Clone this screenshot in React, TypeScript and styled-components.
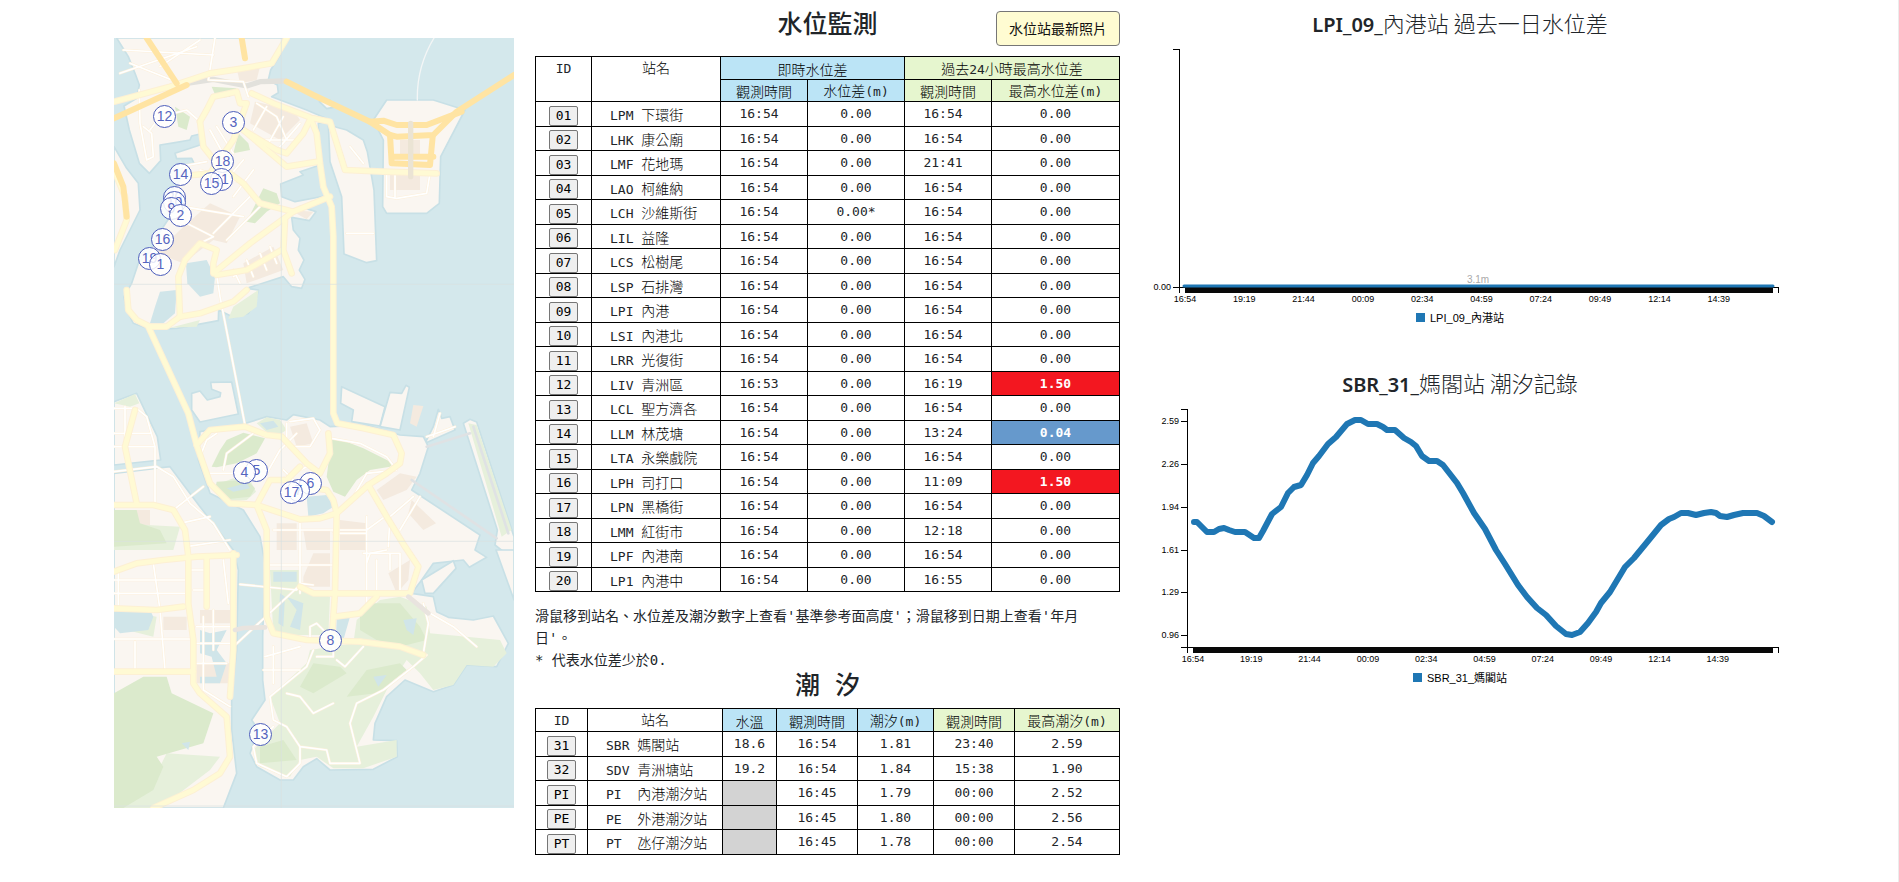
import React from "react";
import styled, { createGlobalStyle } from "styled-components";

const mono = `"DejaVu Sans Mono", "Noto Sans CJK TC", monospace`;
const sans = `"Liberation Sans", "Noto Sans CJK TC", sans-serif`;

const GlobalStyle = createGlobalStyle`
  * { box-sizing: border-box; }
  body { margin: 0; background: #fff; color: #212529; font-family: ${mono}; }
`;

const Page = styled.main`
  display: grid;
  grid-template-columns: 514fr 626fr 758fr;
  min-height: 100vh;
  border-right: 1px solid #ececec;
`;

const MapColumn = styled.section`
  display: flex;
  justify-content: flex-end;
  align-items: flex-start;
  padding-top: 38px;
`;

const MapFrame = styled.div`
  position: relative;
  width: 400px;
  overflow: hidden;
  svg { display: block; width: 100%; }
`;

const Pin = styled.button`
  position: absolute;
  width: 23px;
  height: 23px;
  margin: -12px 0 0 -12px;
  padding: 0;
  border: 1px solid #4c5dbb;
  border-radius: 50%;
  background: rgba(255, 255, 255, 0.85);
  color: #5565bf;
  font: 14px/21px ${sans};
  text-align: center;
`;

const TableColumn = styled.section`
  padding: 11px 20px 0 21px;
`;

const Header = styled.header`
  display: grid;
  grid-template-columns: 1fr auto 1fr;
  align-items: start;
  margin-bottom: 10px;
`;

const Heading = styled.h4`
  margin: 0;
  font-size: 25px;
  line-height: 28px;
  font-weight: 500;
  text-align: center;
`;

const PhotoButton = styled.button`
  justify-self: end;
  height: 35px;
  padding: 0 12px;
  border: 1px solid #767676;
  border-radius: 4px;
  background: #fffcd2;
  color: #111;
  font: 14px/20px ${mono};
`;

const Grid = styled.table`
  width: 100%;
  table-layout: fixed;
  border-collapse: collapse;
  font-size: 14px;
  line-height: 20px;
`;

const Row = styled.tr<{ $h: number }>`
  height: ${(p) => p.$h}px;
`;

const tones = { none: "transparent", blue: "#bbe4f6", green: "#e6f6cf" };

const Head = styled.th<{ $tone?: keyof typeof tones }>`
  padding: 0;
  border: 1px solid #000;
  background: ${(p) => tones[p.$tone ?? "none"]};
  color: #000;
  font-family: "Noto Sans CJK TC", sans-serif;
  font-weight: 300;
  vertical-align: ${(p) => (p.$tone ? "bottom" : "top")};
`;

const Code = styled.span`
  font: 400 13px/18px "DejaVu Sans Mono", monospace;
  color: #212529;
`;

const alerts: Record<string, string> = { "1.50": "#f31720", "0.04": "#6699cc" };

const Cell = styled.td<{ $shift?: boolean; $alert?: string }>`
  padding: 0 ${(p) => (p.$shift ? 10 : 0)}px 0 0;
  border: 1px solid #000;
  font-size: 13px;
  text-align: center;
  background: ${(p) => p.$alert ?? "transparent"};
  color: ${(p) => (p.$alert ? "#fff" : "inherit")};
  font-weight: ${(p) => (p.$alert ? 700 : 400)};
`;

const IdCell = styled(Cell)`
  vertical-align: bottom;
`;

const NameCell = styled.td`
  padding: 1px 0 0 18px;
  border: 1px solid #000;
  color: #000;
  font-family: "Noto Sans CJK TC", sans-serif;
  font-weight: 300;
  white-space: pre;
`;

const BlankCell = styled.td`
  border: 1px solid #000;
  background: #d3d3d3;
`;

const IdButton = styled.button`
  display: block;
  width: 29px;
  height: 20px;
  margin: 0 auto;
  padding: 0;
  border: 1px solid #767676;
  border-radius: 2px;
  background: #efefef;
  color: #000;
  font: 13px/18px ${mono};
`;

const Note = styled.p`
  margin: 13px 0 1px;
  padding-right: 20px;
  font-size: 14px;
  line-height: 22px;
`;

const TideHeading = styled(Heading)`
  margin-bottom: 8px;
`;

const ChartColumn = styled.section`
  display: flex;
  flex-direction: column;
  align-items: flex-start;
  gap: 28px;
`;

const Figure = styled.figure`
  width: 640px;
  max-width: 100%;
  margin: 0;
  svg { display: block; overflow: visible; font-family: ${sans}; }
`;

const ChartTitle = styled.figcaption`
  padding-top: 7px;
  height: 38px;
  font: 300 22px/30px "Noto Sans CJK TC", sans-serif;
  text-align: center;
`;

const Latin = styled.span`
  font-family: "Noto Sans", "Open Sans", sans-serif;
  font-size: 20px;
  font-weight: 600;
`;

type Station = [string, string, string, string, string, string];
const stations: Station[] = [
  ["01", "LPM 下環街", "16:54", "0.00", "16:54", "0.00"],
  ["02", "LHK 康公廟", "16:54", "0.00", "16:54", "0.00"],
  ["03", "LMF 花地瑪", "16:54", "0.00", "21:41", "0.00"],
  ["04", "LAO 柯維納", "16:54", "0.00", "16:54", "0.00"],
  ["05", "LCH 沙維斯街", "16:54", "0.00*", "16:54", "0.00"],
  ["06", "LIL 益隆", "16:54", "0.00", "16:54", "0.00"],
  ["07", "LCS 松樹尾", "16:54", "0.00", "16:54", "0.00"],
  ["08", "LSP 石排灣", "16:54", "0.00", "16:54", "0.00"],
  ["09", "LPI 內港", "16:54", "0.00", "16:54", "0.00"],
  ["10", "LSI 內港北", "16:54", "0.00", "16:54", "0.00"],
  ["11", "LRR 光復街", "16:54", "0.00", "16:54", "0.00"],
  ["12", "LIV 青洲區", "16:53", "0.00", "16:19", "1.50"],
  ["13", "LCL 聖方濟各", "16:54", "0.00", "16:54", "0.00"],
  ["14", "LLM 林茂塘", "16:54", "0.00", "13:24", "0.04"],
  ["15", "LTA 永樂戲院", "16:54", "0.00", "16:54", "0.00"],
  ["16", "LPH 司打口", "16:54", "0.00", "11:09", "1.50"],
  ["17", "LPN 黑橋街", "16:54", "0.00", "16:54", "0.00"],
  ["18", "LMM 紅街市", "16:54", "0.00", "12:18", "0.00"],
  ["19", "LPF 內港南", "16:54", "0.00", "16:54", "0.00"],
  ["20", "LP1 內港中", "16:54", "0.00", "16:55", "0.00"],
];

const tides: [string, string, string, string, string, string, string][] = [
  ["31", "SBR 媽閣站", "18.6", "16:54", "1.81", "23:40", "2.59"],
  ["32", "SDV 青洲塘站", "19.2", "16:54", "1.84", "15:38", "1.90"],
  ["PI", "PI  內港潮汐站", "", "16:45", "1.79", "00:00", "2.52"],
  ["PE", "PE  外港潮汐站", "", "16:45", "1.80", "00:00", "2.56"],
  ["PT", "PT  氹仔潮汐站", "", "16:45", "1.78", "00:00", "2.54"],
];

const Cols = ({ widths }: { widths: number[] }) => (
  <colgroup>
    {widths.map((w, i) => (
      <col key={i} style={{ width: `${(w / 584) * 100}%` }} />
    ))}
  </colgroup>
);

/* The station code takes the first four characters of a name */
const Name = ({ text }: { text: string }) => (
  <NameCell>
    <Code>{text.slice(0, 4)}</Code>
    {text.slice(4)}
  </NameCell>
);

/* Station pins, drawn in order so later ones overlap earlier ones */
const pins: [number, number, number][] = [
  [12, 51, 79], [3, 120, 85], [18, 109, 124], [14, 67, 137], [11, 108, 142],
  [15, 98, 146], [20, 61, 160], [10, 61, 165], [9, 58, 171], [2, 67, 178],
  [16, 49, 202], [19, 36, 221], [1, 47, 227], [5, 143, 433], [4, 131, 435],
  [6, 197, 446], [7, 185, 453], [17, 178, 455], [8, 217, 603], [13, 147, 697],
];

const land = [
  "M50 24L85 80L105 130L118 165L110 205L72 228L88 300L118 400L148 430L182 392L180 345L225 338L270 330L275 318L300 312V345L225 370L230 386L275 385L282 400L248 412L238 455L200 500L210 560L170 620L150 665L115 700L95 760L72 800L78 835L100 880L150 898L230 895L355 872L356 840L400 862L445 850L465 820L475 780L440 775L550 740L575 770L605 775L615 748L598 720L612 690L595 660L600 625L580 600L575 562L628 572L648 545L600 530L690 510L690 495L585 515L545 500L542 462L610 435L600 425L660 405L655 280L690 270L620 240L515 200L535 188L532 165L505 150L512 120L540 75L565 24Z",
  "M42 350L80 415L115 460L120 540L90 600L60 660L42 710Z",
  "M685 285L740 300L790 330L802 365L822 480L830 692L800 698L732 672L725 500L690 395Z",
  "M860 210H1000L1095 240L1022 380L1018 520L980 550H860L848 530L850 330L820 270Z",
  "M658 215L690 210L700 232L680 236Z",
  "M275 1090L300 1083L322 1110L360 1100L362 1088L335 1078L332 1057L395 1056L415 1152L300 1176L275 1140Z",
  "M725 1070L855 1130L840 1188L755 1175L760 1140L722 1120Z",
  "M870 1087L905 1090L918 1066L928 1072L900 1200L840 1190Z",
  "M1015 1138L1025 1165L1050 1160L1065 1200L975 1240L1000 1190Z",
  "M300 1205L430 1182L500 1160L560 1170L580 1154L660 1170L690 1190L800 1185L900 1215L970 1220L985 1250L960 1330L935 1380L1140 1515L1125 1560L1160 1582L1108 1612L1090 1590L1000 1600L965 1650L935 1690L1000 1700L1010 1745L1045 1762L1120 1770L1180 1758L1225 1840L1190 1910L1100 1905L1060 1965L1000 1985L915 1950L860 2000L825 2080L820 2130L890 2132L892 2180L820 2218L690 2220L650 2186L610 2210L580 2250H540L470 2210L450 2170L475 2100L455 2070L495 2010L488 1950V1820L495 1600L480 1520L430 1440L330 1390L295 1290Z",
  "M42 1115L110 1090L172 1220L182 1290L42 1305Z",
  "M42 1330L210 1310L300 1430L400 1560L415 1620L410 1860L395 2000V2100L410 2230L370 2334H42Z",
  "M1090 1180L1110 1168L1130 1176L1242 1520V1590L1185 1545L1192 1500Z",
  "M1188 1560H1242V1710Z",
  "M965 1650L1060 1592L1068 1615L1000 1690H975Z",
];

const builtUp = [
  "M465 215L580 240L600 270L540 330L450 280Z",
  "M240 600L330 520L420 560L380 640L340 630L250 700L170 670Z",
  "M410 115L480 110L470 150L420 160Z",
  "M530 1480H590V1560H530ZM610 1500H690V1560H620ZM720 1470L800 1480V1560H720ZM935 1410L1008 1480L970 1500L925 1450Z",
  "M570 1190L620 1180L640 1240L590 1250ZM830 1380L900 1330L950 1340L920 1380L850 1410Z",
  "M940 1125L970 1128L950 1190L930 1180ZM865 1630L930 1590L925 1650L890 1690Z",
  "M640 1570H690V1670H610V1640ZM900 330H960V380H900ZM870 430H960V480H870Z",
  "M60 1440H150V1500H60ZM300 1740H390V1780H300ZM290 1900H390V1960H290ZM190 1760H260V1800H190Z",
  "M430 700L520 650L550 720L440 760ZM570 540L640 545L620 568Z",
];

const paleGreen = [
  "M385 866L400 830L475 780L470 830L430 860ZM300 870L290 890L210 893Z",
  "M42 1120L105 1092L118 1120L90 1130Z",
  "M360 1360L400 1345L450 1350L468 1385L440 1410L380 1415L355 1390Z",
  "M510 1620H600V1670L690 1700L685 1815H520Z",
  "M770 1770L840 1710L900 1700L980 1730L990 1810L1200 1830L1220 1870L1180 1910L1100 1905L1060 1965L1000 1980L960 1930L920 1890L860 1980L820 2060L770 2150L890 2130V2180L790 2215H700L650 2180L600 2190L570 2240L480 2210L460 2160L540 2080L510 2000L620 1900L630 1860L760 1840Z",
  "M42 1480L240 1490L220 1560H42Z",
  "M160 2250L200 2170L360 2180L330 2220L180 2334H42V2150Z",
  "M42 1760H90L80 1800L160 1820L170 1760L100 1750L42 1740ZM1105 1180L1130 1185L1235 1500L1205 1520Z",
  "M470 1180L500 1162L540 1170L560 1200L520 1225Z",
];

const deepGreen = [
  "M335 1310L360 1260L380 1230L430 1208L495 1225L470 1270L410 1300L350 1312Z",
  "M695 1225L720 1228L790 1255L880 1300L870 1310L810 1320L770 1350L735 1400L700 1385L680 1340Z",
  "M345 1380L350 1355L440 1350L465 1375L450 1400L380 1408Z",
  "M440 575L490 475L530 490L540 520L500 545L465 580ZM400 370L415 310L445 340L450 360ZM335 170L410 175L390 200L350 205ZM225 230L270 260L260 300L235 290Z",
  "M780 1750L820 1720L900 1720L960 1790L980 1830L900 1850L830 1830L780 1800Z",
  "M600 1970L640 1900L720 1910L740 1930L640 1990ZM740 2000L800 1920L900 1900L920 1920L830 1990Z",
  "M480 2150L550 2130L590 2190L480 2200Z",
  "M42 1990L130 1940L200 1940L215 1990L340 2050L310 2140L170 2180L190 2210L160 2280L70 2334H42ZM42 1440H110L120 1480L180 1500L200 1540L42 1550Z",
];

const innerWater = [
  "M258 700L320 690L345 740L340 790L300 800L262 760Z",
  "M180 785L230 780L225 850L190 880L150 880L165 830Z",
  "M620 1400L680 1395L700 1430L670 1450L625 1460Z",
  "M480 1180L520 1172L535 1190L500 1200Z",
  "M42 1745L150 1740L160 1760L145 1800L60 1810L42 1790Z",
  "M710 1760H750L730 1830H708ZM820 1940L860 1935L835 1970ZM910 1770L950 1765L940 1815L920 1800Z",
  "M520 1625H590V1655H520ZM540 1690L555 1700L550 1790L535 1780ZM560 1700L610 1720L600 1800L570 1790L590 1740Z",
  "M300 1800L330 1810L380 1800L350 1860L380 1900L360 1960H300V1940H350L335 1880L300 1870Z",
  "M245 2140L270 2135L265 2160ZM380 1375L440 1360L450 1375L400 1385Z",
];

const yellowRoads = [
  "M42 215L210 170L330 130L410 118L515 100L560 24",
  "M300 275L320 240L340 200L410 185L420 220H440L400 330L330 430L280 435",
  "M455 190L520 220L630 262L650 310L660 400L670 470L695 530L700 620V1150L712 1180L790 1195L880 1215L905 1270L900 1300L860 1330L805 1365L710 1450",
  "M300 275L310 350L350 400L430 460L480 520L580 545L690 500",
  "M632 265L610 310L560 370L530 360L430 300",
  "M640 265L690 275L735 420L850 425L1010 430",
  "M430 300L560 410L655 395",
  "M580 545L560 560L450 640L340 730L340 700L350 660L300 640L255 690L235 740L240 860",
  "M350 735L440 720L545 660M555 570L550 660L575 730",
  "M80 780L85 840L110 870L150 890L200 890L240 860L300 850L400 815L440 780",
  "M145 890L265 1150L290 1245L330 1360L390 1420L470 1425L600 1468L660 1465L710 1450",
  "M290 1245L330 1200L435 1190L500 1215L545 1220L620 1300L660 1330L690 1270L685 1210",
  "M470 1425L510 1350L560 1350L600 1310M470 1425L500 1500V1760L520 1810L620 1830L780 1835",
  "M710 1450L705 1690L695 1830M710 1450L700 1410L680 1380L600 1370",
  "M805 1365L860 1460L915 1550L955 1610L930 1690L830 1690H640L600 1670",
  "M705 1760L780 1750L830 1700M780 1835L900 1850L970 1875",
  "M42 1625L110 1600L190 1590L290 1580L410 1575",
  "M42 1425H160L220 1440L255 1500L265 1580V1720L280 1830V1960L300 1990L380 2060L390 2180L360 2230L280 2280L160 2334",
  "M42 1735L170 1740L250 1730M42 1925H280M105 1140L75 1250L110 1420",
  "M400 1570V1860L390 2000M320 1585V1730",
  "M42 420L75 500L80 570L45 660",
];

const whiteRoads = [
  "M345 24L325 150L430 155L445 200M118 180L120 280L140 390L160 380L155 310L130 290",
  "M350 735L360 800L435 1185",
  "M150 300L180 260L260 240L300 275M240 410L320 395M300 420L430 460",
  "M470 220L530 260L560 330M500 230L460 300M550 260L500 350M600 280L540 350M470 330L600 330",
  "M60 130L290 50M70 60L340 75M180 110L300 30M90 100L240 160M100 200L240 160",
  "M340 610L450 500M380 630L480 530M250 530L430 560M260 580L340 620L300 640M370 460L430 390M400 500L460 420M330 300L380 390M350 290L400 370",
  "M400 740L480 690M420 760L400 720M460 740L440 690M500 720L480 670M530 700L510 650",
  "M400 1850L600 1665M420 1663L590 1680L600 1660L640 1665",
  "M42 1135H110L140 1160L165 1250V1420M42 1210H150M42 1250H160M75 1130V1260",
  "M42 1325L170 1310L220 1340L270 1420L340 1480L390 1560M220 1440L310 1370M240 1480L330 1460M260 1550L390 1530",
  "M160 1600L180 1740L195 1920M105 1835V1920M55 1620V1730M42 1650H260M42 1690H260M42 1827H270M270 1620H320M280 1680H320",
  "M370 1590L385 1720M310 1760V1980L390 2030M290 1790H400M290 1840H400M290 1900H380M340 1740V1860",
  "M600 1480V1690M505 1605H700M520 1500H800L855 1460M800 1460V1730M860 1560L810 1570L800 1600M700 1510H800",
  "M790 1570H900V1680M830 1590V1680M870 1570V1620",
  "M695 1225L780 1240L860 1280L890 1320L800 1330L760 1400M300 1280L320 1230L350 1210M330 1330H500L540 1260L590 1210M370 1320L380 1270L460 1210",
  "M570 1175L640 1165L660 1200L630 1250L560 1250V1180M540 1350L620 1310M560 1380L640 1320M550 1320L600 1370",
  "M640 1860L620 1910L510 2000L520 2070L560 2090L600 2150L680 2160L690 2200H780L750 2080L770 2020L850 1980L940 1910L980 1875",
  "M600 2150L600 2200L560 2240L470 2200L460 2150L520 2090M930 1700L990 1750L1060 1790L1130 1850",
  "M970 1720L985 1780L970 1870M630 1830V1790L650 1780L670 1800M650 1880H700V1840M710 1890L735 1910L790 1850",
  "M495 1880L600 1850M490 1920H600M520 1850V1960M560 1990L600 2000L640 2050L700 2020",
  "M860 425V500L890 505L980 490L990 430M885 430V500M740 610H820M750 350L790 400",
  "M865 1550L870 1460L940 1400M900 1500L960 1400M980 1220L1065 1190M1020 1150L1000 1220",
];

const orangeRoads = [
  "M42 265L260 165M140 24L230 160M425 24L435 85",
  "M560 155L640 195L810 275L870 315L890 320L1000 315L1070 245L1242 135",
  "M810 275L850 272L890 285H980L1085 245",
  "M870 315L875 400L990 405L998 320M880 380H1000",
  "M42 400L70 470L80 560",
];

const MacauMap = () => (
  <svg viewBox="42 24 1200 2310" role="img" aria-label="澳門地圖">
    <rect x="42" y="24" width="1200" height="2310" fill="#d4e8ec" />
    <g strokeLinejoin="round">
      {land.map((d) => (
        <path key={d} d={d} fill="#faf6f1" stroke="#c8e0e6" strokeWidth="5" />
      ))}
      <g fill="#f4eadf">{builtUp.map((d) => <path key={d} d={d} />)}</g>
      <g fill="#e6f0db">{paleGreen.map((d) => <path key={d} d={d} />)}</g>
      <g fill="#dbeacc">{deepGreen.map((d) => <path key={d} d={d} />)}</g>
      <g fill="#d0e5e9">{innerWater.map((d) => <path key={d} d={d} />)}</g>
    </g>
    <g fill="none" strokeLinecap="round" strokeLinejoin="round">
      <path d="M1120 1190L1225 1510M935 1350L1190 1525M980 1250L1110 1210" stroke="#dfe2e4" strokeWidth="8" />
      <path d="M260 160L340 148L440 168L480 155L555 153" stroke="#e2e1dc" strokeWidth="16" />
      <g stroke="#fdf0da" strokeWidth="8">{whiteRoads.map((d) => <path key={d} d={d} />)}</g>
      <g stroke="#ffffff" strokeWidth="5">{whiteRoads.map((d) => <path key={d} d={d} />)}</g>
      <g stroke="#fdf0d4" strokeWidth="20">{yellowRoads.map((d) => <path key={d} d={d} />)}</g>
      <g stroke="#fffad4" strokeWidth="14">{yellowRoads.map((d) => <path key={d} d={d} />)}</g>
      <g stroke="#ffe4a3" strokeWidth="18">{orangeRoads.map((d) => <path key={d} d={d} />)}</g>
      <path d="M1002 24Q950 110 952 210" stroke="#f4f6f6" strokeWidth="4" />
      <path d="M932 280V440" stroke="#ebe4d4" strokeWidth="16" />
      <path d="M405 1800L430 1794L495 1792M925 1700L985 1750" stroke="#e9e4df" strokeWidth="14" />
    </g>
    <path d="M544 24V2334M42 763H1242M42 1534H1242M42 2328H1242" stroke="#d9dfe1" strokeWidth="2" />
  </svg>
);

const times = ["16:54", "19:19", "21:44", "00:09", "02:34", "04:59", "07:24", "09:49", "12:14", "14:39"];

interface ChartProps {
  axisX: number;
  pitch: number;
  ticks: [string, number][];
  line: string;
  lineWidth: number;
  station: string;
  legendX: number;
  mark?: string;
}

const TOP = 11;
const BASE = 249;

const LineChart = ({ axisX, pitch, ticks, line, lineWidth, station, legendX, mark }: ChartProps) => (
  <svg width="640" height="294" role="img" aria-label={station}>
    <g stroke="#000" fill="none" shapeRendering="crispEdges">
      <path d={`M${axisX - 6} ${TOP}H${axisX}V${BASE}H${axisX - 6}`} />
      <path d={`M${axisX} ${BASE + 6}V${BASE}H638V${BASE + 6}`} />
      {ticks.map(([t, y]) => (
        <path key={t} d={`M${axisX - 6} ${y}H${axisX}`} />
      ))}
    </g>
    <rect x={axisX + 6} y={BASE} width={627 - axisX} height="6" fill="#080808" />
    <g fontSize="9" fill="#000">
      {ticks.map(([t, y]) => (
        <text key={t} x={axisX - 8} y={y + 3} textAnchor="end">{t}</text>
      ))}
      {times.map((t, i) => (
        <text key={t} x={axisX + 6 + i * pitch} y={BASE + 15} textAnchor="middle">{t}</text>
      ))}
    </g>
    {mark && <text x="338" y="245" fontSize="10" fill="#aaa" textAnchor="middle">{mark}</text>}
    <polyline points={line} fill="none" stroke="#1f77b4" strokeWidth={lineWidth} strokeLinecap="round" strokeLinejoin="round" />
    <rect x={legendX} y="275" width="9" height="9" fill="#1f77b4" />
    <text x={legendX + 14} y="284" fontSize="11" fill="#000">{station}</text>
  </svg>
);

const tideLine =
  "54,124 57,124 62,129 67,134 74,134 79,131 84,130 89,132 95,134 105,134 114,140 119,140 123,133 132,116 141,109 148,95 154,89 161,87 167,77 173,65 179,58 188,46 196,39 207,26 215,22 221,22 228,26 237,26 243,29 247,32 255,32 264,40 271,44 276,48 282,58 289,63 297,63 303,67 317,85 323,95 334,115 345,131 356,152 365,166 378,187 387,199 397,210 406,217 416,228 426,236 432,237 440,234 448,225 456,214 461,205 470,194 485,169 494,160 508,143 521,127 529,121 534,119 541,115 548,115 556,117 564,115 571,114 576,115 580,118 587,119 594,117 603,115 617,115 624,118 632,124";

export default function App() {
  return (
    <>
      <GlobalStyle />
      <Page>
        <MapColumn>
          <MapFrame>
            <MacauMap />
            {pins.map(([n, x, y]) => (
              <Pin key={n} style={{ left: x, top: y }}>{n}</Pin>
            ))}
          </MapFrame>
        </MapColumn>

        <TableColumn>
          <Header>
            <span />
            <Heading>水位監測</Heading>
            <PhotoButton>水位站最新照片</PhotoButton>
          </Header>
          <Grid>
            <Cols widths={[56, 129, 87, 97, 87, 128]} />
            <thead>
              <Row $h={23}>
                <Head rowSpan={2}><Code>ID</Code></Head>
                <Head rowSpan={2}>站名</Head>
                <Head colSpan={2} $tone="blue">即時水位差</Head>
                <Head colSpan={2} $tone="green">過去<Code>24</Code>小時最高水位差</Head>
              </Row>
              <Row $h={22}>
                <Head $tone="blue">觀測時間</Head>
                <Head $tone="blue">水位差<Code>(m)</Code></Head>
                <Head $tone="green">觀測時間</Head>
                <Head $tone="green">最高水位差<Code>(m)</Code></Head>
              </Row>
            </thead>
            <tbody>
              {stations.map(([id, name, t, v, mt, mv], i) => (
                <Row key={id} $h={i % 2 ? 24 : 25}>
                  <IdCell><IdButton>{id}</IdButton></IdCell>
                  <Name text={name} />
                  <Cell $shift>{t}</Cell>
                  <Cell>{v}</Cell>
                  <Cell $shift>{mt}</Cell>
                  <Cell $alert={alerts[mv]}>{mv}</Cell>
                </Row>
              ))}
            </tbody>
          </Grid>
          <Note>
            滑鼠移到站名、水位差及潮汐數字上查看'基準參考面高度'；滑鼠移到日期上查看'年月日'。
            <br />* 代表水位差少於0.
          </Note>
          <TideHeading>潮 汐</TideHeading>
          <Grid>
            <Cols widths={[52, 135, 54, 81, 76, 81, 105]} />
            <thead>
              <Row $h={23}>
                <Head><Code>ID</Code></Head>
                <Head>站名</Head>
                <Head $tone="blue">水溫</Head>
                <Head $tone="blue">觀測時間</Head>
                <Head $tone="blue">潮汐<Code>(m)</Code></Head>
                <Head $tone="green">觀測時間</Head>
                <Head $tone="green">最高潮汐<Code>(m)</Code></Head>
              </Row>
            </thead>
            <tbody>
              {tides.map(([id, name, temp, t, v, mt, mv], i) => (
                <Row key={id} $h={i % 2 ? 24 : 25}>
                  <IdCell><IdButton>{id}</IdButton></IdCell>
                  <Name text={name} />
                  {temp ? <Cell>{temp}</Cell> : <BlankCell />}
                  <Cell>{t}</Cell>
                  <Cell>{v}</Cell>
                  <Cell>{mt}</Cell>
                  <Cell>{mv}</Cell>
                </Row>
              ))}
            </tbody>
          </Grid>
        </TableColumn>

        <ChartColumn>
          <Figure>
            <ChartTitle><Latin>LPI_09_</Latin>內港站 過去一日水位差</ChartTitle>
            <LineChart axisX={39} pitch={59.3} ticks={[["0.00", 249]]} line="44,248 633,248" lineWidth={3} station="LPI_09_內港站" legendX={276} mark="3.1m" />
          </Figure>
          <Figure>
            <ChartTitle><Latin>SBR_31_</Latin>媽閣站 潮汐記錄</ChartTitle>
            <LineChart
              axisX={47}
              pitch={58.3}
              ticks={[["2.59", 23], ["2.26", 66], ["1.94", 109], ["1.61", 152], ["1.29", 194], ["0.96", 237]]}
              line={tideLine}
              lineWidth={6}
              station="SBR_31_媽閣站"
              legendX={273}
            />
          </Figure>
        </ChartColumn>
      </Page>
    </>
  );
}
